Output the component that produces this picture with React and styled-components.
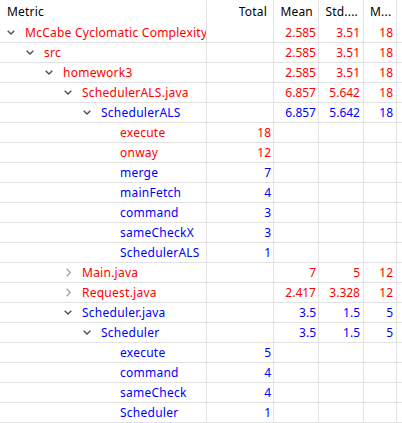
import React from "react";
import styled, { createGlobalStyle } from "styled-components";

const RED = "#ff0000";
const BLUE = "#0000ff";
const LINE = "#e2e2e2";

const Global = createGlobalStyle`
  html, body { margin: 0; padding: 0; background: #fff; }
  body { font-family: "Noto Sans", "Open Sans", sans-serif; font-size: 12px; }
`;

const Table = styled.div`
  width: 402px;
  height: 423px;
  overflow: hidden;
  background: #fff;
`;

const Row = styled.div`
  display: grid;
  grid-template-columns: 207px 67px 45px 45px 33px 1fr;
  height: ${(p) => (p.$header ? 23 : 20)}px;
  box-sizing: border-box;
  border-bottom: ${(p) => (p.$header ? "none" : `1px solid ${LINE}`)};
  color: ${(p) => p.$color || "#000"};
`;

const Cell = styled.div`
  box-sizing: border-box;
  border-right: ${(p) => (p.$last ? "none" : `1px solid ${LINE}`)};
  display: flex;
  align-items: center;
  justify-content: ${(p) => (p.$right ? "flex-end" : "flex-start")};
  padding: ${(p) => p.$pad || "0"};
  white-space: nowrap;
  overflow: hidden;
  min-width: 0;
`;

const HeadText = styled.span`
  overflow: hidden;
  white-space: nowrap;
  letter-spacing: 0.2px;
`;

const NameCell = styled(Cell)`
  padding-left: ${(p) => 7 + p.$level * 19}px;
`;

const Toggle = styled.span`
  width: 8px;
  height: 10px;
  flex: none;
  display: flex;
  align-items: center;
  justify-content: center;
  margin-right: 10px;
`;

const Name = styled.span`
  white-space: nowrap;
  letter-spacing: 0.25px;
`;

function Chevron({ kind }) {
  if (kind === "down") {
    return (
      <svg width="8" height="5" viewBox="0 0 8 5">
        <path d="M0.7 0.7 L4 4 L7.3 0.7" fill="none" stroke="#505050" strokeWidth="1.4" />
      </svg>
    );
  }
  if (kind === "right") {
    return (
      <svg width="5" height="9" viewBox="0 0 5 9">
        <path d="M0.7 0.7 L4.2 4.5 L0.7 8.3" fill="none" stroke="#a8a8a8" strokeWidth="1.4" />
      </svg>
    );
  }
  return null;
}

const rows = [
  { l: 0, n: "McCabe Cyclomatic Complexity", c: RED, e: "down", t: "", m: "2.585", s: "3.51", x: "18" },
  { l: 1, n: "src", c: RED, e: "down", t: "", m: "2.585", s: "3.51", x: "18" },
  { l: 2, n: "homework3", c: RED, e: "down", t: "", m: "2.585", s: "3.51", x: "18" },
  { l: 3, n: "SchedulerALS.java", c: RED, e: "down", t: "", m: "6.857", s: "5.642", x: "18" },
  { l: 4, n: "SchedulerALS", c: BLUE, e: "down", t: "", m: "6.857", s: "5.642", x: "18" },
  { l: 5, n: "execute", c: RED, t: "18" },
  { l: 5, n: "onway", c: RED, t: "12" },
  { l: 5, n: "merge", c: BLUE, t: "7" },
  { l: 5, n: "mainFetch", c: BLUE, t: "4" },
  { l: 5, n: "command", c: BLUE, t: "3" },
  { l: 5, n: "sameCheckX", c: BLUE, t: "3" },
  { l: 5, n: "SchedulerALS", c: BLUE, t: "1" },
  { l: 3, n: "Main.java", c: RED, e: "right", t: "", m: "7", s: "5", x: "12" },
  { l: 3, n: "Request.java", c: RED, e: "right", t: "", m: "2.417", s: "3.328", x: "12" },
  { l: 3, n: "Scheduler.java", c: BLUE, e: "down", t: "", m: "3.5", s: "1.5", x: "5" },
  { l: 4, n: "Scheduler", c: BLUE, e: "down", t: "", m: "3.5", s: "1.5", x: "5" },
  { l: 5, n: "execute", c: BLUE, t: "5" },
  { l: 5, n: "command", c: BLUE, t: "4" },
  { l: 5, n: "sameCheck", c: BLUE, t: "4" },
  { l: 5, n: "Scheduler", c: BLUE, t: "1" },
];

export default function App() {
  return (
    <>
      <Global />
      <Table>
        <Row $header>
          <Cell $pad="0 0 0 7px">
            <HeadText>Metric</HeadText>
          </Cell>
          <Cell $right $pad="0 6px 0 7px">
            <HeadText>Total</HeadText>
          </Cell>
          <Cell $right $pad="0 5px 0 6px">
            <HeadText>Mean</HeadText>
          </Cell>
          <Cell $right $pad="0 5px 0 6px">
            <HeadText>Std....</HeadText>
          </Cell>
          <Cell $right $pad="0 5px 0 6px">
            <HeadText>M...</HeadText>
          </Cell>
          <Cell $last />
        </Row>
        {rows.map((r, i) => (
          <Row key={i} $color={r.c}>
            <NameCell $level={r.l}>
              <Toggle>
                <Chevron kind={r.e} />
              </Toggle>
              <Name>{r.n}</Name>
            </NameCell>
            <Cell $right $pad="0 2px 0 0">{r.t}</Cell>
            <Cell $right $pad="0 2px 0 0">{r.m}</Cell>
            <Cell $right $pad="0 3px 0 0">{r.s}</Cell>
            <Cell $right $pad="0 3px 0 0">{r.x}</Cell>
            <Cell $last />
          </Row>
        ))}
      </Table>
    </>
  );
}
